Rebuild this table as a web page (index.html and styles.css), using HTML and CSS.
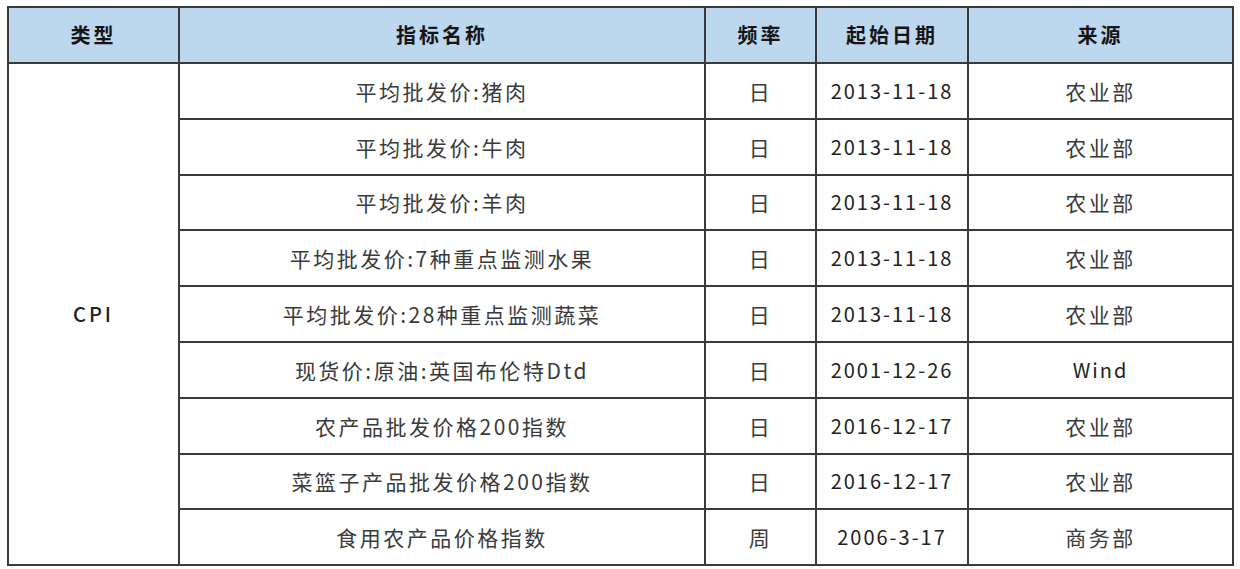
FILE: index.html
```html
<!DOCTYPE html>
<html lang="zh-CN">
<head>
<meta charset="utf-8">
<title>指标表</title>
<link rel="stylesheet" href="styles.css">
</head>
<body>
<table class="data-table">
  <colgroup>
    <col class="c-type">
    <col class="c-name">
    <col class="c-freq">
    <col class="c-date">
    <col class="c-src">
  </colgroup>
  <thead>
    <tr>
      <th>类型</th>
      <th>指标名称</th>
      <th>频率</th>
      <th>起始日期</th>
      <th>来源</th>
    </tr>
  </thead>
  <tbody>
    <tr>
      <td rowspan="9" class="type">CPI</td>
      <td>平均批发价:猪肉</td><td>日</td><td class="num">2013-11-18</td><td>农业部</td>
    </tr>
    <tr><td>平均批发价:牛肉</td><td>日</td><td class="num">2013-11-18</td><td>农业部</td></tr>
    <tr><td>平均批发价:羊肉</td><td>日</td><td class="num">2013-11-18</td><td>农业部</td></tr>
    <tr><td>平均批发价:7种重点监测水果</td><td>日</td><td class="num">2013-11-18</td><td>农业部</td></tr>
    <tr><td>平均批发价:28种重点监测蔬菜</td><td>日</td><td class="num">2013-11-18</td><td>农业部</td></tr>
    <tr><td>现货价:原油:英国布伦特Dtd</td><td>日</td><td class="num">2001-12-26</td><td class="num">Wind</td></tr>
    <tr><td>农产品批发价格200指数</td><td>日</td><td class="num">2016-12-17</td><td>农业部</td></tr>
    <tr><td>菜篮子产品批发价格200指数</td><td>日</td><td class="num">2016-12-17</td><td>农业部</td></tr>
    <tr><td>食用农产品价格指数</td><td>周</td><td class="num">2006-3-17</td><td>商务部</td></tr>
  </tbody>
</table>
</body>
</html>
```
FILE: styles.css
```css
html, body {
  margin: 0;
  padding: 0;
  background: #ffffff;
}
body {
  padding: 6px 0 0 7px;
  font-family: "Noto Sans CJK SC", "Noto Sans", sans-serif;
  color: #2a2a2a;
}
.data-table {
  border-collapse: collapse;
  table-layout: fixed;
  width: 1225px;
}
.c-type { width: 171px; }
.c-name { width: 526px; }
.c-freq { width: 111px; }
.c-date { width: 152px; }
.c-src { width: 265px; }
.data-table th,
.data-table td {
  border: 2px solid #3a3a3a;
  text-align: center;
  vertical-align: middle;
  padding: 0;
  font-size: 21px;
  line-height: 22px;
  letter-spacing: 2.5px;
  white-space: nowrap;
}
.data-table th {
  background: #bdd7ee;
  height: 54px;
  font-size: 20px;
  font-weight: 700;
  color: #151515;
  letter-spacing: 3px;
}
.data-table td {
  height: 53.8px;
  font-weight: 400;
  color: #3a3a3a;
}
.data-table td.num {
  font-size: 20px;
  letter-spacing: 2px;
  color: #222222;
}
.data-table td.type {
  font-size: 20px;
  font-weight: 500;
  color: #222222;
  letter-spacing: 3px;
}
```
